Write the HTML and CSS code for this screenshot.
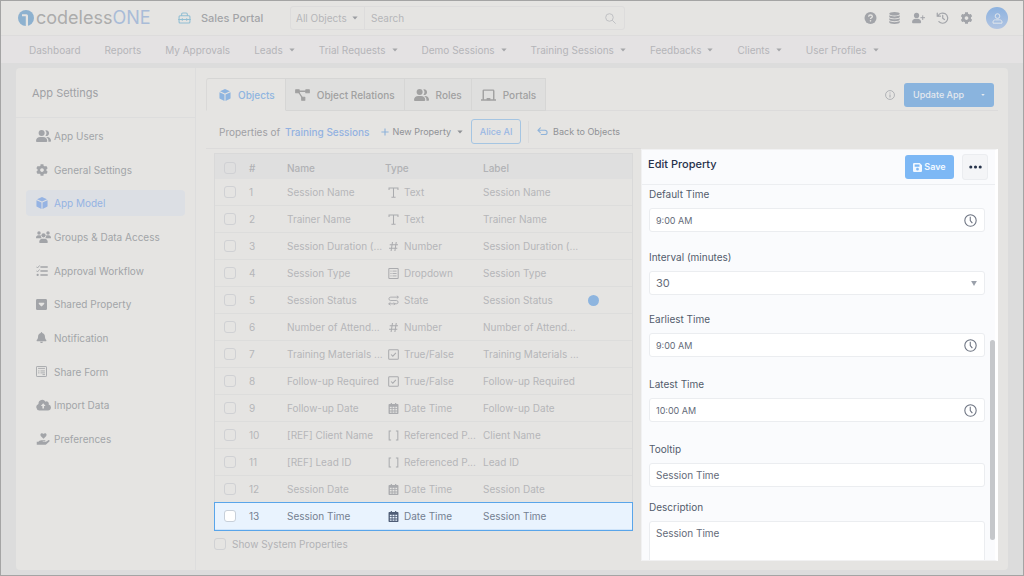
FILE: index.html
```html
<!DOCTYPE html>
<html lang="en">
<head>
<meta charset="utf-8">
<meta name="viewport" content="width=device-width, initial-scale=1">
<title>Sales Portal - App Model</title>
<link rel="stylesheet" href="styles.css">
</head>
<body>
<svg class="sprite" aria-hidden="true">
  <symbol id="users" viewBox="0 0 20 16"><circle cx="7.500" cy="4" r="4"/><path d="M0 14.600C0 11.300 2.600 9.200 5.500 9.200h4c2.900 0 5.500 2.100 5.500 5.400 0 .8-.5 1.300-1.200 1.300H1.200C.5 15.900 0 15.400 0 14.600z"/><path d="M12.300.6a3.800 3.800 0 1 1 .2 7.200c1-1 1.500-2.200 1.500-3.700 0-1.400-.6-2.600-1.700-3.500zM13.500 9.200h1.500c2.800 0 5 1.900 5 5.200 0 .8-.5 1.400-1.200 1.400h-2.600c.3-.4.400-.8.400-1.300 0-2.200-1-4-3.100-5.300z"/></symbol>
  <symbol id="cog" viewBox="0 0 512 512"><path d="M487.400 315.700l-42.600-24.600c4.300-23.200 4.300-47 0-70.200l42.600-24.600c4.900-2.800 7.100-8.600 5.500-14-11.100-35.600-30-67.800-54.700-94.600-3.800-4.100-10-5.100-14.800-2.300L380.800 110c-17.900-15.400-38.500-27.300-60.800-35.100V25.800c0-5.600-3.900-10.500-9.400-11.700-36.700-8.200-74.300-7.800-109.200 0-5.500 1.200-9.400 6.100-9.400 11.700V75c-22.200 7.900-42.800 19.800-60.800 35.100L88.700 85.500c-4.900-2.800-11-1.900-14.800 2.300-24.700 26.700-43.600 58.900-54.700 94.600-1.700 5.400.6 11.200 5.500 14L67.300 221c-4.300 23.200-4.300 47 0 70.200l-42.600 24.600c-4.900 2.800-7.100 8.600-5.500 14 11.100 35.600 30 67.800 54.700 94.600 3.800 4.100 10 5.100 14.800 2.300l42.600-24.600c17.900 15.400 38.500 27.300 60.800 35.100v49.200c0 5.600 3.900 10.500 9.400 11.700 36.700 8.200 74.300 7.800 109.200 0 5.500-1.200 9.400-6.100 9.400-11.700v-49.200c22.200-7.900 42.800-19.800 60.800-35.100l42.600 24.600c4.900 2.800 11 1.900 14.800-2.300 24.700-26.700 43.600-58.900 54.700-94.600 1.500-5.500-.7-11.300-5.600-14.100zM256 336c-44.100 0-80-35.900-80-80s35.900-80 80-80 80 35.900 80 80-35.900 80-80 80z"/></symbol>
  <symbol id="cube" viewBox="0 0 16 16"><path d="M8 0l6.600 2.900L8 6 1.400 2.900zM.6 4.200l6.700 3V16L1.300 13Q.6 12.600.6 11.900zM15.400 4.200l-6.700 3V16l6-3q.7-.4.700-1.100z"/></symbol>
  <symbol id="groups" viewBox="0 0 20 16"><circle cx="4" cy="2.600" r="2.300"/><circle cx="16" cy="2.600" r="2.300"/><circle cx="10" cy="5.800" r="2.800"/><path d="M0 9.200C0 7 1.300 5.800 3 5.800h2.200c.5 0 .8.1 1.200.3 0 1.500.4 2.600 1.400 3.600H.8C.3 9.700 0 9.500 0 9.200zM20 9.200c0-2.200-1.300-3.400-3-3.400h-2.200c-.5 0-.8.1-1.200.3 0 1.500-.4 2.600-1.400 3.600h7c.5 0 .8-.2.800-.5zM4.300 15c0-2.900 1.700-4.700 4-4.700h3.400c2.300 0 4 1.800 4 4.700 0 .6-.4 1-1 1H5.300c-.6 0-1-.4-1-1z"/></symbol>
  <symbol id="tasks" viewBox="0 0 16 16"><path d="M6.500 2.700H15M6.500 8H15M6.500 13.300H15" fill="none" stroke="currentColor" stroke-width="1.800" stroke-linecap="round"/><path d="M.8 2.600l1.300 1.300L4.500 1M.8 7.900l1.300 1.300L4.500 6.300" fill="none" stroke="currentColor" stroke-width="1.200" stroke-linecap="round"/><circle cx="2.200" cy="13.300" r="1.500"/></symbol>
  <symbol id="shared" viewBox="0 0 16 16"><path fill-rule="evenodd" d="M2 0h12a2 2 0 0 1 2 2v12a2 2 0 0 1-2 2H2a2 2 0 0 1-2-2V2a2 2 0 0 1 2-2zM5 5.500c-1 0-1.500 1-.8 1.700l3.200 3.400c.3.300.9.300 1.200 0l3.200-3.400c.7-.7.200-1.700-.8-1.700z"/></symbol>
  <symbol id="bell" viewBox="0 0 16 16"><path d="M8 0c.6 0 1 .4 1 1v.6c2.300.5 4 2.400 4 4.900 0 3 1 4.100 1.900 5.100.7.800.1 1.900-.9 1.900H2c-1 0-1.600-1.100-.9-1.900C2 10.600 3 9.500 3 6.500c0-2.500 1.700-4.400 4-4.900V1c0-.6.400-1 1-1zM6 14.200h4c0 1-.9 1.800-2 1.800s-2-.8-2-1.800z"/></symbol>
  <symbol id="form" viewBox="0 0 16 16"><g fill="none" stroke="currentColor"><rect x=".7" y=".7" width="14.600" height="14.600" rx="1" stroke-width="1.300"/><path d="M3 3.500h10M3 7.200h2M6.500 7.200H13M3 10h2M6.500 10H13M9.500 12.500H13" stroke-width="1.200"/></g></symbol>
  <symbol id="cloud" viewBox="0 0 20 16"><path fill-rule="evenodd" d="M16.800 7.300A3 3 0 0 0 12.600 3.500 5 5 0 0 0 3.300 6v.5A4.500 4.500 0 0 0 4.500 15.200H16a4 4 0 0 0 .8-7.900zM12.800 9.300h-2.100v3.500H8.500V9.300H6.400L9.600 5.600z"/></symbol>
  <symbol id="handheart" viewBox="0 0 18 16"><path d="M9 7.500L5.600 4.200C4.600 3.200 4.700 1.600 5.700.8 6.600 0 8 .2 8.700 1L9 1.300 9.300 1C10 .2 11.400 0 12.300.8c1 .8 1.100 2.400.1 3.400zM0 11.500h2.200l1.400-1.100c.8-.6 1.700-.9 2.600-.9h4.600c1.300 0 1.200 1.900 0 1.900H8.300c-.5 0-.5.7 0 .7h3.500l3.500-2.500c1.300-.9 2.500.5 1.500 1.600l-4 3.800c-.6.600-1.200.8-2 .8H0z"/></symbol>
  <symbol id="relations" viewBox="0 0 20 16"><path d="M1 1h4.500v4H1zM14.500 1H19v4h-4.500zM9 11h4v4H9z" stroke="currentColor" stroke-width="1.600" stroke-linejoin="round"/><path d="M5.500 3h9M4.800 4l4.800 7.500" fill="none" stroke="currentColor" stroke-width="1.700"/></symbol>
  <symbol id="portal" viewBox="0 0 20 16"><path d="M3 14V2.500q0-1 1-1h12q1 0 1 1V14M0 14.700h20" fill="none" stroke="currentColor" stroke-width="1.900"/><path d="M7.500 12h5v3h-5z"/></symbol>
  <symbol id="caret" viewBox="0 0 8 4"><path d="M.5 0h7L4 4z"/></symbol>
  <symbol id="triangle" viewBox="0 0 8 7"><path d="M0 0h8L4 7z"/></symbol>
  <symbol id="search" viewBox="0 0 16 16"><g fill="none" stroke="currentColor" stroke-width="1.300"><circle cx="6.500" cy="6.500" r="5.500"/><path d="M10.500 10.500L15.500 15.500"/></g></symbol>
  <symbol id="help" viewBox="0 0 16 16"><circle cx="8" cy="8" r="8"/><path d="M5.500 6.200C5.500 4.700 6.500 4 8 4s2.500.8 2.500 2c0 1.700-2.500 1.700-2.500 3.300" fill="none" stroke="#e5e4e2" stroke-width="1.700"/><circle cx="8" cy="11.800" r="1.100" fill="#e5e4e2"/></symbol>
  <symbol id="database" viewBox="0 0 14 16"><path d="M0 2.300C0 1 3 0 7 0s7 1 7 2.300S11 4.700 7 4.700 0 3.600 0 2.300zM0 4.400c1.500 1 4 1.500 7 1.500s5.500-.5 7-1.500v1.900C14 7.500 11 8.500 7 8.500S0 7.500 0 6.300zM0 8.200c1.500 1 4 1.500 7 1.500s5.500-.5 7-1.500v1.900c0 1.200-3 2.200-7 2.200s-7-1-7-2.200zM0 12c1.500 1 4 1.500 7 1.500s5.500-.5 7-1.500v1.800c0 1.200-3 2.200-7 2.200s-7-1-7-2.200z"/></symbol>
  <symbol id="userplus" viewBox="0 0 20 16"><circle cx="7" cy="4" r="4"/><path d="M0 14.700c0-3.400 2.300-5.500 5.500-5.500h3c3.200 0 5.500 2.100 5.500 5.500 0 .8-.5 1.300-1.200 1.300H1.200C.5 16 0 15.500 0 14.700z"/><path d="M16.500 4v7M13 7.500h7" stroke="currentColor" stroke-width="1.500"/></symbol>
  <symbol id="history" viewBox="0 0 16 16"><g fill="none" stroke="currentColor" stroke-width="1.600" stroke-linecap="round"><path d="M2 5.200A6.800 6.800 0 1 1 3.200 12.900M8.300 4.500V8.300L10.600 10"/><path d="M1 1.300V5.500H5.200"/></g></symbol>
  <symbol id="person" viewBox="0 0 16 16"><g fill="none" stroke="currentColor" stroke-width="1.400"><circle cx="8" cy="4.500" r="3.400"/><path d="M1.500 14.800V13c0-2 1.500-3 3.500-3h6c2 0 3.500 1 3.500 3v1.800z"/></g></symbol>
  <symbol id="briefcase" viewBox="0 0 16 14"><g fill="none" stroke="currentColor" stroke-width="1.300"><path d="M4.500 4.500V2.300q0-1.500 1.500-1.500h4q1.500 0 1.500 1.500v2.200"/><rect x="1.300" y="4.300" width="13.400" height="8.900" rx="1.200"/><path d="M1.300 8.800h13.400M5.300 7.200v3.200M10.700 7.200v3.200M.2 8.800h1M14.800 8.800h1"/></g></symbol>
  <symbol id="info" viewBox="0 0 16 16"><circle cx="8" cy="8" r="7.100" fill="none" stroke="currentColor" stroke-width="1.500"/><path d="M7.100 7h1.800v5H7.100zM7.100 3.900h1.800v1.800H7.100z"/></symbol>
  <symbol id="back" viewBox="0 0 18 14"><path d="M5.500 1L1.500 5l4 4M2 5h11q3.500 0 3.500 3.500T13 12H7" fill="none" stroke="currentColor" stroke-width="1.800" stroke-linecap="round" stroke-linejoin="round"/></symbol>
  <symbol id="plus" viewBox="0 0 10 10"><path d="M5 .5v9M.5 5h9" fill="none" stroke="currentColor" stroke-width="1.400"/></symbol>
  <symbol id="text" viewBox="0 0 16 16"><path d="M1.500 4.500v-3h13v3M8 1.500V15M5 15h6" fill="none" stroke="currentColor" stroke-width="1.500"/></symbol>
  <symbol id="hash" viewBox="0 0 16 16"><path d="M6.500 1.500l-2 13M12 1.500l-2 13M2.500 5.300h12M1.500 10.500h12" fill="none" stroke="currentColor" stroke-width="1.500"/></symbol>
  <symbol id="list" viewBox="0 0 16 16"><g fill="none" stroke="currentColor"><rect x="1.200" y=".8" width="13.600" height="14.400" rx=".8" stroke-width="1.500"/><path d="M3.500 4.500h1.700M6.500 4.500h6M3.500 8h1.700M6.500 8h6M3.500 11.500h1.700M6.500 11.500h6" stroke-width="1.300"/></g></symbol>
  <symbol id="state" viewBox="0 0 18 16"><g fill="none" stroke="currentColor" stroke-width="1.500"><path d="M17 2.500H4.500q-3 0-3 2.800T4.500 8h9q3 0 3 2.700t-3 2.700H1"/><path d="M14.500.3l2.500 2.200-2.500 2.200M4 11l-2.700 2.400L4 15.700M9.500 11.300l2 2.100-2 2.100"/></g></symbol>
  <symbol id="check" viewBox="0 0 16 16"><g fill="none" stroke="currentColor" stroke-width="1.500"><rect x="1" y="1" width="14" height="14" rx="1.300"/><path d="M4.500 8l2.500 2.500L11.500 5.700"/></g></symbol>
  <symbol id="calendar" viewBox="0 0 16 16"><path fill-rule="evenodd" d="M4 0h1.700v1.500h4.600V0H12v1.500h2q1.200 0 1.200 1.200V15q0 1-1 1H1.800q-1 0-1-1V2.700q0-1.200 1.200-1.200h2zM2.700 5.500v2h2.600v-2zM6.600 5.500v2h2.800v-2zM10.700 5.500v2h2.600v-2zM2.700 8.900v2h2.600v-2zM6.600 8.900v2h2.800v-2zM10.700 8.900v2h2.600v-2zM2.700 12.300v1.900h2.600v-1.900zM6.600 12.300v1.900h2.800v-1.900zM10.700 12.300v1.900h2.600v-1.900z"/></symbol>
  <symbol id="brackets" viewBox="0 0 16 16"><path d="M4.500 1.500H1.700v13h2.800M11.500 1.500h2.800v13h-2.800" fill="none" stroke="currentColor" stroke-width="1.500"/></symbol>
  <symbol id="save" viewBox="0 0 16 16"><path fill-rule="evenodd" d="M2 0h10l4 4v10a2 2 0 0 1-2 2H2a2 2 0 0 1-2-2V2a2 2 0 0 1 2-2zM3 2.800v3.700h8.500V2.800zM8 8.500a2.500 2.500 0 1 0 0 5 2.500 2.500 0 0 0 0-5z"/></symbol>
  <symbol id="clock" viewBox="0 0 16 16"><g fill="none" stroke="currentColor" stroke-width="1.300"><circle cx="8" cy="8" r="7"/><path d="M7.700 3.500V8l2.600 3.300"/></g></symbol>
  <symbol id="dots" viewBox="0 0 16 4"><circle cx="2.200" cy="2" r="1.900"/><circle cx="8" cy="2" r="1.900"/><circle cx="13.800" cy="2" r="1.900"/></symbol>
</svg>

<header class="topbar">
  <a class="brand" href="#" aria-label="codelessONE">
    <svg class="brand-mark" viewBox="0 0 16 16" aria-hidden="true"><circle cx="8" cy="8" r="8" fill="#8db1cf"/><path d="M4 4.200h4.500q1.500 0 1.500 1.500V16H7.800V6.300H4z" fill="#e5e4e2"/></svg>
    <span class="brand-name">codeless<span class="brand-one">ONE</span></span>
  </a>
  <div class="portal"><svg class="portal-icon"><use href="#briefcase"/></svg><span>Sales Portal</span></div>
  <div class="searchbox">
    <button class="scope" type="button">All Objects <svg class="caret"><use href="#caret"/></svg></button>
    <input class="search-input" type="text" placeholder="Search" aria-label="Search">
    <svg class="search-icon"><use href="#search"/></svg>
  </div>
  <div class="tools">
    <button type="button" aria-label="Help"><svg><use href="#help"/></svg></button>
    <button type="button" aria-label="Data"><svg><use href="#database"/></svg></button>
    <button type="button" aria-label="Invite user"><svg><use href="#userplus"/></svg></button>
    <button type="button" aria-label="History"><svg><use href="#history"/></svg></button>
    <button type="button" aria-label="Settings"><svg><use href="#cog"/></svg></button>
  </div>
  <button class="avatar" type="button" aria-label="Account"><svg><use href="#person"/></svg></button>
</header>

<nav class="mainnav">
  <a href="#">Dashboard</a>
  <a href="#">Reports</a>
  <a href="#">My Approvals</a>
  <a href="#">Leads <svg class="caret"><use href="#caret"/></svg></a>
  <a href="#">Trial Requests <svg class="caret"><use href="#caret"/></svg></a>
  <a href="#">Demo Sessions <svg class="caret"><use href="#caret"/></svg></a>
  <a href="#">Training Sessions <svg class="caret"><use href="#caret"/></svg></a>
  <a href="#">Feedbacks <svg class="caret"><use href="#caret"/></svg></a>
  <a href="#">Clients <svg class="caret"><use href="#caret"/></svg></a>
  <a href="#">User Profiles <svg class="caret"><use href="#caret"/></svg></a>
</nav>

<div class="shell">
  <aside class="sidebar">
    <h1 class="sidebar-title">App Settings</h1>
    <nav class="side-list">
      <a href="#"><svg class="wide"><use href="#users"/></svg>App Users</a>
      <a href="#"><svg><use href="#cog"/></svg>General Settings</a>
      <a href="#" class="active"><svg><use href="#cube"/></svg>App Model</a>
      <a href="#"><svg class="wide"><use href="#groups"/></svg>Groups &amp; Data Access</a>
      <a href="#"><svg><use href="#tasks"/></svg>Approval Workflow</a>
      <a href="#"><svg class="small"><use href="#shared"/></svg>Shared Property</a>
      <a href="#"><svg class="small"><use href="#bell"/></svg>Notification</a>
      <a href="#"><svg class="small"><use href="#form"/></svg>Share Form</a>
      <a href="#"><svg class="wide"><use href="#cloud"/></svg>Import Data</a>
      <a href="#"><svg class="wide"><use href="#handheart"/></svg>Preferences</a>
    </nav>
  </aside>

  <main class="main">
    <div class="tabbar">
      <button class="tab selected" type="button"><svg><use href="#cube"/></svg>Objects</button>
      <button class="tab" type="button"><svg class="wide"><use href="#relations"/></svg>Object Relations</button>
      <button class="tab" type="button"><svg class="wide"><use href="#users"/></svg>Roles</button>
      <button class="tab" type="button"><svg class="wide"><use href="#portal"/></svg>Portals</button>
      <div class="publish">
        <svg class="info"><use href="#info"/></svg>
        <button class="update" type="button"><span>Update App</span><svg class="caret"><use href="#caret"/></svg></button>
      </div>
    </div>

    <div class="actions">
      <h2 class="actions-title">Properties of <a href="#">Training Sessions</a></h2>
      <button class="new-property" type="button"><svg class="plus"><use href="#plus"/></svg>New Property<svg class="caret"><use href="#caret"/></svg></button>
      <button class="alice" type="button">Alice AI</button>
      <a class="back" href="#"><svg><use href="#back"/></svg>Back to Objects</a>
    </div>

    <div class="workspace">
      <section class="listing">
        <table class="props">
          <colgroup><col class="c-check"><col class="c-num"><col class="c-name"><col class="c-type"><col class="c-label"><col class="c-mark"></colgroup>
          <thead>
            <tr><th><input type="checkbox" aria-label="Select all"></th><th>#</th><th>Name</th><th>Type</th><th>Label</th><th></th></tr>
          </thead>
          <tbody>
            <tr><td><input type="checkbox" aria-label="Select 1"></td><td>1</td><td>Session Name</td><td><svg><use href="#text"/></svg>Text</td><td>Session Name</td><td></td></tr>
            <tr><td><input type="checkbox" aria-label="Select 2"></td><td>2</td><td>Trainer Name</td><td><svg><use href="#text"/></svg>Text</td><td>Trainer Name</td><td></td></tr>
            <tr><td><input type="checkbox" aria-label="Select 3"></td><td>3</td><td>Session Duration (...</td><td><svg><use href="#hash"/></svg>Number</td><td>Session Duration (...</td><td></td></tr>
            <tr><td><input type="checkbox" aria-label="Select 4"></td><td>4</td><td>Session Type</td><td><svg><use href="#list"/></svg>Dropdown</td><td>Session Type</td><td></td></tr>
            <tr><td><input type="checkbox" aria-label="Select 5"></td><td>5</td><td>Session Status</td><td><svg><use href="#state"/></svg>State</td><td>Session Status</td><td><span class="dot"></span></td></tr>
            <tr><td><input type="checkbox" aria-label="Select 6"></td><td>6</td><td>Number of Attend...</td><td><svg><use href="#hash"/></svg>Number</td><td>Number of Attend...</td><td></td></tr>
            <tr><td><input type="checkbox" aria-label="Select 7"></td><td>7</td><td>Training Materials ...</td><td><svg><use href="#check"/></svg>True/False</td><td>Training Materials ...</td><td></td></tr>
            <tr><td><input type="checkbox" aria-label="Select 8"></td><td>8</td><td>Follow-up Required</td><td><svg><use href="#check"/></svg>True/False</td><td>Follow-up Required</td><td></td></tr>
            <tr><td><input type="checkbox" aria-label="Select 9"></td><td>9</td><td>Follow-up Date</td><td><svg><use href="#calendar"/></svg>Date Time</td><td>Follow-up Date</td><td></td></tr>
            <tr><td><input type="checkbox" aria-label="Select 10"></td><td>10</td><td>[REF] Client Name</td><td><svg><use href="#brackets"/></svg>Referenced P...</td><td>Client Name</td><td></td></tr>
            <tr><td><input type="checkbox" aria-label="Select 11"></td><td>11</td><td>[REF] Lead ID</td><td><svg><use href="#brackets"/></svg>Referenced P...</td><td>Lead ID</td><td></td></tr>
            <tr><td><input type="checkbox" aria-label="Select 12"></td><td>12</td><td>Session Date</td><td><svg><use href="#calendar"/></svg>Date Time</td><td>Session Date</td><td></td></tr>
            <tr class="current"><td><input type="checkbox" aria-label="Select 13"></td><td>13</td><td>Session Time</td><td><svg><use href="#calendar"/></svg>Date Time</td><td>Session Time</td><td></td></tr>
          </tbody>
        </table>
        <label class="system"><input type="checkbox">Show System Properties</label>
      </section>

      <section class="editor">
        <header class="editor-head">
          <h2>Edit Property</h2>
          <button class="save" type="button"><svg><use href="#save"/></svg>Save</button>
          <button class="more" type="button" aria-label="More"><svg><use href="#dots"/></svg></button>
        </header>
        <form class="editor-body">
          <div class="field">
            <label for="default-time">Default Time</label>
            <div class="control time"><input id="default-time" type="text" value="9:00 AM"><svg><use href="#clock"/></svg></div>
          </div>
          <div class="field option">
            <label for="interval">Interval (minutes)</label>
            <div class="control choice"><select id="interval"><option>30</option></select><svg><use href="#triangle"/></svg></div>
          </div>
          <div class="field range">
            <label for="earliest">Earliest Time</label>
            <div class="control time"><input id="earliest" type="text" value="9:00 AM"><svg><use href="#clock"/></svg></div>
          </div>
          <div class="field range">
            <label for="latest">Latest Time</label>
            <div class="control time"><input id="latest" type="text" value="10:00 AM"><svg><use href="#clock"/></svg></div>
          </div>
          <div class="field compact">
            <label for="tooltip">Tooltip</label>
            <div class="control"><input id="tooltip" type="text" value="Session Time"></div>
          </div>
          <div class="field">
            <label for="description">Description</label>
            <textarea id="description">Session Time</textarea>
          </div>
        </form>
        <div class="scroll-thumb"></div>
      </section>
    </div>
  </main>
</div>
</body>
</html>
```
FILE: styles.css
```css
* { box-sizing: border-box; }

body {
  margin: 0;
  height: 100vh;
  display: flex;
  flex-direction: column;
  border: 1px solid #a4a4a4;
  background: #dcdcdc;
  color: #adafb3;
  font: 10px/14px Inter, "Liberation Sans", sans-serif;
  overflow: hidden;
}

a { color: inherit; text-decoration: none; }
h1, h2 { margin: 0; font-weight: 400; }
svg { fill: currentColor; flex: none; display: block; }
button, input, select, textarea { font: inherit; color: inherit; }
button { margin: 0; padding: 0; border: 0; background: none; display: flex; align-items: center; }
.sprite { position: absolute; width: 0; height: 0; }
.caret { width: 7px; height: 4px; }

input[type="checkbox"] {
  appearance: none;
  display: block;
  flex: none;
  width: 12px;
  height: 12px;
  margin: 0;
  border: 1px solid #d0d1d4;
  border-radius: 3px;
  background: transparent;
}

/* top bar */
.topbar {
  flex: none;
  height: 35px;
  display: flex;
  align-items: center;
  padding: 0 15px 0 17px;
  background: #e5e4e2;
  border-bottom: 1px solid #dddcdc;
}
.brand { display: flex; align-items: center; gap: 2px; width: 160px; flex: none; }
.brand-mark { width: 16px; height: 16px; }
.brand-name { font-size: 18px; line-height: 22px; color: #acacac; white-space: nowrap; }
.brand-one { color: #a9bcd8; }
.portal { display: flex; align-items: center; gap: 10px; width: 112px; flex: none; font-size: 11px; font-weight: 500; color: #a3a4a8; white-space: nowrap; }
.portal-icon { width: 13px; height: 12px; color: #91bed3; }
.searchbox { flex: 0 1 335px; height: 24px; display: flex; align-items: center; border: 1px solid #dddcdc; border-radius: 3px; }
.scope { gap: 5px; width: 74px; height: 100%; padding-left: 5px; border-right: 1px solid #dddcdc; color: #b5b6b9; flex: none; white-space: nowrap; }
.scope .caret { width: 6px; color: #9b9da2; }
.search-input { flex: 1; min-width: 0; border: 0; padding: 0 6px; background: none; outline: 0; }
.search-input::placeholder { color: #b5b6b9; opacity: 1; }
.search-icon { width: 11px; height: 11px; margin-right: 8px; color: #bcbdc0; }
.tools { display: flex; align-items: center; margin-left: auto; color: #a2a4a9; }
.tools button { width: 24px; height: 24px; justify-content: center; }
.tools svg { width: 13px; height: 12px; }
.avatar { width: 22px; height: 22px; margin-left: 8px; border-radius: 50%; justify-content: center; background: linear-gradient(#8db2df, #b2c5e2); color: #e3e7ec; flex: none; }
.avatar svg { width: 11px; height: 11px; }

.mainnav { flex: none; height: 27px; display: flex; align-items: center; gap: 24px; padding: 0 28px; background: #e4e2e3; color: #b5b5b9; white-space: nowrap; }
.mainnav a { display: flex; align-items: center; gap: 6px; }
.mainnav .caret { color: #a6a7aa; width: 6px; }

/* card */
.shell { flex: 1; min-height: 0; display: flex; margin: 5px 15px; background: #e5e4e2; border-radius: 4px; }
.sidebar { width: 180px; flex: none; display: flex; flex-direction: column; border-right: 1px solid #dddddd; }
.sidebar-title { height: 50px; padding: 18px 16px 0; font-size: 11px; border-bottom: 1px solid #dddddd; color: #9fa1a5; }
.side-list { flex: 1; display: flex; flex-direction: column; justify-content: space-between; padding: 5px 10px 118px; }
.side-list a { height: 26px; display: grid; grid-template-columns: 18px auto; justify-content: start; align-items: center; padding-left: 10px; border-radius: 4px; color: #a2a4a8; white-space: nowrap; }
.side-list svg { width: 12px; height: 12px; }
.side-list .wide { width: 15px; }
.side-list .small { width: 11px; height: 11px; }
.side-list .active { background: #dcdfe4; color: #95b3e3; }

.main { flex: 1; min-width: 0; display: flex; flex-direction: column; padding: 10px 10px 9px 10px; }
.tabbar { flex: none; height: 33px; display: flex; border-bottom: 1px solid #dcdbdb; }
.tab { height: 33px; gap: 7px; padding: 0 9px; border: 1px solid #d6d6d5; border-left: 0; background: #dfdfde; color: #a1a1a1; font-weight: 500; white-space: nowrap; }
.tab svg { width: 12px; height: 12px; }
.tab .wide { width: 15px; }
.tab.selected { border-left: 1px solid #dad9d8; border-bottom-color: #e5e4e2; border-top-left-radius: 3px; background: #e5e4e2; color: #8fb5e0; padding: 0 10px 0 12px; }
.publish { display: flex; align-items: center; gap: 9px; margin-left: auto; padding: 1px 4px 0 0; }
.info { width: 10px; height: 10px; }
.update { width: 90px; height: 24px; justify-content: space-between; padding: 0 9px; border-radius: 3px; background: #8ab4de; color: #e5e9ee; font-size: 9px; font-weight: 500; white-space: nowrap; }
.update .caret { width: 4px; height: 2px; }

.actions { flex: none; height: 38px; display: flex; align-items: center; padding: 4px 13px 0; margin-right: 357px; border-bottom: 1px solid #dcdbdb; white-space: nowrap; }
.actions-title { font-size: 10px; color: #9fa0a4; }
.actions-title a { color: #93b2e1; margin-left: 2px; font-weight: 500; }
.new-property { font-size: 9px; color: #909296; margin-left: 12px; gap: 3px; }
.new-property .plus { width: 8px; height: 8px; color: #8fb3da; }
.new-property .caret { width: 6px; margin-left: 3px; }
.alice { width: 50px; height: 25px; justify-content: center; margin-left: 8px; border: 1px solid #a5c5e2; border-radius: 3px; font-size: 9px; font-weight: 500; color: #9ab8e4; flex: none; }
.back { display: flex; align-items: center; gap: 5px; height: 22px; margin-left: 7px; padding-left: 8px; border-left: 1px solid #dcdbdb; font-size: 9px; color: #909296; }
.back svg { width: 11px; height: 9px; color: #8fb3da; }

.workspace { flex: 1; min-height: 0; display: grid; grid-template-columns: minmax(0, 1fr) 357px; }
.listing { padding: 4px 8px 0 8px; }

/* table */
.props { width: 100%; table-layout: fixed; border-collapse: separate; border-spacing: 0; border: 1px solid #d9d9d9; border-bottom: 0; color: #b5b6b9; }
.c-check { width: 34px; }
.c-num { width: 38px; }
.c-name, .c-type { width: 98px; }
.c-label { width: 100px; }
.props th { height: 25px; padding: 2px 0 0; text-align: left; font-weight: 500; background: #dfdfdf; color: #b1b2b5; }
.props td { height: 27px; padding: 0; border-bottom: 1px solid #dddddc; white-space: nowrap; }
.props th:first-child, .props td:first-child { padding-left: 9px; }
.props td svg { display: inline-block; width: 11px; height: 11px; margin: 0 5px 0 3px; vertical-align: -2px; color: #aaabae; }
.dot { display: block; width: 11px; height: 11px; margin-left: 5px; border-radius: 50%; background: #8eb5df; }
.current { outline: 1px solid #59a5ea; background: #e9f3fe; color: #747f91; }
.props .current td { border-bottom-color: #cfe4fa; }
.props .current svg { color: #4e5c76; }
.current input[type="checkbox"] { background: #fff; border-color: #c8d0da; }
.system { display: flex; align-items: center; gap: 6px; margin-top: 7px; color: #b2b3b6; }

/* editor */
.editor { position: relative; min-height: 0; display: flex; flex-direction: column; background: #fafbfd; border: 1px solid #f1f1f2; border-right: 3px solid #fff; overflow: hidden; color: #535b6c; }
.editor-head { flex: none; height: 35px; display: flex; align-items: center; padding: 0 7px 0 6px; border-bottom: 1px solid #eceef1; }
.editor-head h2 { align-self: flex-start; margin: 7px auto 0 0; font-size: 11px; font-weight: 500; color: #27324b; }
.save { width: 49px; height: 24px; justify-content: center; gap: 2px; border-radius: 3px; background: #7db8f5; color: #f2f8ff; font-size: 9px; font-weight: 600; }
.save svg { width: 9px; height: 9px; }
.more { width: 26px; height: 26px; justify-content: center; margin-left: 8px; border: 1px solid #ebedf0; border-radius: 3px; background: #f4f5f7; color: #28344b; }
.more svg { width: 13px; height: 4px; }
.editor-body { flex: 1; min-height: 0; padding: 2px 10px 0 7px; overflow: hidden; }
.field { display: grid; gap: 7px; margin-bottom: 18px; }
.field.option { margin-bottom: 17px; }
.field.range { margin-bottom: 20px; }
.field.compact { margin-bottom: 13px; }
.control { position: relative; }
.control input, .control select, textarea { display: block; width: 100%; height: 24px; margin: 0; padding: 0 6px; border: 1px solid #ebedf0; border-radius: 3px; background: #fff; outline: 0; color: #646b79; appearance: none; }
.time input { font-size: 9px; }
.choice select { font-size: 11px; }
.control svg { position: absolute; right: 8px; top: 6px; width: 13px; height: 13px; color: #6b7280; }
.choice svg { top: 10px; width: 6px; height: 5px; color: #9aa0aa; }
textarea { height: 48px; padding-top: 4px; resize: vertical; }
.scroll-thumb { position: absolute; right: 0; top: 190px; bottom: 20px; width: 5px; border-radius: 3px; background: #c5c7ca; }
```
